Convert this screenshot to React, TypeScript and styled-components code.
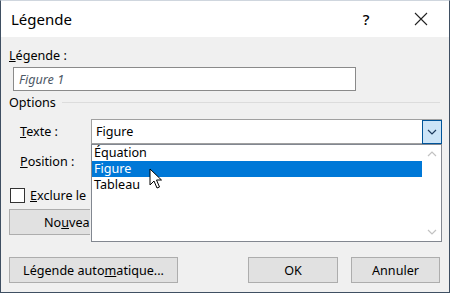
import React from "react";
import styled, { createGlobalStyle } from "styled-components";

const Global = createGlobalStyle`
  html, body { margin: 0; padding: 0; background: #f0f0f0; }
  * { box-sizing: border-box; }
`;

const FONT = `"Noto Sans", "Liberation Sans", sans-serif`;

const Window = styled.div`
  width: 450px;
  height: 293px;
  border: 1px solid #3f4f62;
  border-top-color: #cfd6de;
  display: flex;
  flex-direction: column;
  font-family: ${FONT};
  font-size: 12.6px;
  color: #000;
  background: #f0f0f0;
  overflow: hidden;
`;

const TitleBar = styled.div`
  height: 36px;
  background: #fff;
  display: flex;
  align-items: center;
  padding-left: 10px;
  flex-shrink: 0;
`;

const Title = styled.div`
  font-size: 15px;
  flex: 1;
  padding-bottom: 1px;
`;

const Help = styled.div`
  font-size: 15px;
  width: 20px;
  text-align: center;
  margin-right: 37px;
  font-weight: 500;
`;

const Close = styled.div`
  width: 16px;
  height: 16px;
  margin-right: 20px;
  display: flex;
`;

const Body = styled.div`
  flex: 1;
  display: flex;
  flex-direction: column;
  padding: 0 9px 0 7px;
`;

const Label = styled.div<{ $mt?: number; $ml?: number }>`
  margin-top: ${(p) => p.$mt ?? 0}px;
  margin-left: ${(p) => p.$ml ?? 0}px;
  height: 18px;
  line-height: 18px;
  white-space: nowrap;
`;

const TextInput = styled.div`
  margin-top: 2px;
  margin-left: 5px;
  width: 343px;
  height: 24px;
  background: #fff;
  border: 1px solid #8a8a8a;
  display: flex;
  align-items: center;
  padding-left: 5px;
  font-style: italic;
  color: #4d5866;
`;

const GroupRow = styled.div`
  margin-top: 2px;
  height: 18px;
  display: flex;
  align-items: center;
  gap: 6px;
  padding-left: 1px;
`;

const GroupLine = styled.div`
  flex: 1;
  height: 1px;
  background: #dcdcdc;
`;

const FieldRow = styled.div<{ $mt: number }>`
  margin-top: ${(p) => p.$mt}px;
  display: grid;
  grid-template-columns: 71px 351px;
  align-items: center;
  padding-left: 12px;
  height: 25px;
`;

const Combo = styled.div`
  position: relative;
  height: 25px;
  background: #fff;
  border: 1px solid #a0a0a0;
  display: flex;
  align-items: center;
  padding-left: 4px;
`;

const ComboText = styled.div`
  flex: 1;
`;

const ComboButton = styled.div`
  width: 20px;
  height: 24px;
  margin-right: -1px;
  background: #cce4f7;
  border: 1px solid #005499;
  display: flex;
  align-items: center;
  justify-content: center;
`;

const List = styled.div`
  position: absolute;
  top: 24px;
  left: -1px;
  width: 351px;
  height: 98px;
  background: #fff;
  border: 1px solid #828790;
  display: flex;
  z-index: 5;
`;

const Items = styled.div`
  flex: 1;
  display: flex;
  flex-direction: column;
`;

const Item = styled.div<{ $selected?: boolean }>`
  height: 16px;
  line-height: 16px;
  padding-left: 2px;
  background: ${(p) => (p.$selected ? "#0078d7" : "transparent")};
  color: ${(p) => (p.$selected ? "#fff" : "#000")};
`;

const ScrollBar = styled.div`
  width: 19px;
  display: flex;
  flex-direction: column;
  justify-content: space-between;
  align-items: center;
  padding: 6px 0 6px;
`;

const CheckRow = styled.div`
  margin-top: 14px;
  height: 15px;
  width: 82px;
  overflow: hidden;
  display: flex;
  align-items: center;
  gap: 5px;
  padding-left: 2px;
`;

const CheckBox = styled.div`
  width: 15px;
  height: 15px;
  flex-shrink: 0;
  border: 1px solid #333;
  background: #fff;
`;

const CheckText = styled.span`
  white-space: nowrap;
`;

const Button = styled.div<{ $w: number }>`
  width: ${(p) => p.$w}px;
  height: 26px;
  background: #e1e1e1;
  border: 1px solid #adadad;
  display: flex;
  align-items: center;
  justify-content: center;
  white-space: nowrap;
  flex-shrink: 0;
`;

const ClippedButton = styled(Button)`
  justify-content: flex-start;
  padding-left: 34px;
  overflow: hidden;
  border-right: none;
`;

const NewButtonWrap = styled.div`
  margin-top: 6px;
  padding-left: 1px;
`;

const Footer = styled.div`
  margin-top: 22px;
  display: flex;
  padding-left: 1px;
`;

const Spacer = styled.div`
  flex: 1;
`;

const Gap = styled.div`
  width: 13px;
`;

const Cursor = styled.svg`
  position: absolute;
  left: 57px;
  top: 48px;
  z-index: 6;
`;

const Chevron = ({ color, up }: { color: string; up?: boolean }) => (
  <svg width="10" height="6" viewBox="0 0 10 6">
    <path
      d={up ? "M1 5 L5 1 L9 5" : "M1 1 L5 5 L9 1"}
      fill="none"
      stroke={color}
      strokeWidth="1.2"
    />
  </svg>
);

export default function App() {
  return (
    <>
      <Global />
      <Window>
        <TitleBar>
          <Title>Légende</Title>
          <Help>?</Help>
          <Close>
            <svg width="16" height="16" viewBox="0 0 16 16">
              <path d="M2 2 L14 14 M14 2 L2 14" stroke="#222" strokeWidth="1.1" />
            </svg>
          </Close>
        </TitleBar>
        <Body>
          <Label $mt={10} $ml={1}>
            <u>L</u>égende :
          </Label>
          <TextInput>Figure 1</TextInput>
          <GroupRow>
            Options
            <GroupLine />
          </GroupRow>
          <FieldRow $mt={8}>
            <Label>
              <u>T</u>exte :
            </Label>
            <Combo>
              <ComboText>Figure</ComboText>
              <ComboButton>
                <Chevron color="#1d3a5c" />
              </ComboButton>
              <List>
                <Items>
                  <Item>Équation</Item>
                  <Item $selected>Figure</Item>
                  <Item>Tableau</Item>
                </Items>
                <ScrollBar>
                  <Chevron color="#c2c2c2" up />
                  <Chevron color="#c2c2c2" />
                </ScrollBar>
              </List>
              <Cursor width="16" height="24" viewBox="0 0 16 24">
                <path
                  d="M1 1 L1 17 L5 13 L8 20 L10.5 19 L7.5 12 L12.5 12 Z"
                  fill="#fff"
                  stroke="#000"
                  strokeWidth="1"
                  strokeLinejoin="round"
                />
              </Cursor>
            </Combo>
          </FieldRow>
          <FieldRow $mt={5}>
            <Label>
              <u>P</u>osition :
            </Label>
            <Combo />
          </FieldRow>
          <CheckRow>
            <CheckBox />
            <CheckText>
              <u>E</u>xclure le
            </CheckText>
          </CheckRow>
          <NewButtonWrap>
            <ClippedButton $w={81}>
              No<u>u</u>vea
            </ClippedButton>
          </NewButtonWrap>
          <Footer>
            <Button $w={169}>
              Légende auto<u>m</u>atique...
            </Button>
            <Spacer />
            <Button $w={90}>OK</Button>
            <Gap />
            <Button $w={89}>Annuler</Button>
          </Footer>
        </Body>
      </Window>
    </>
  );
}
